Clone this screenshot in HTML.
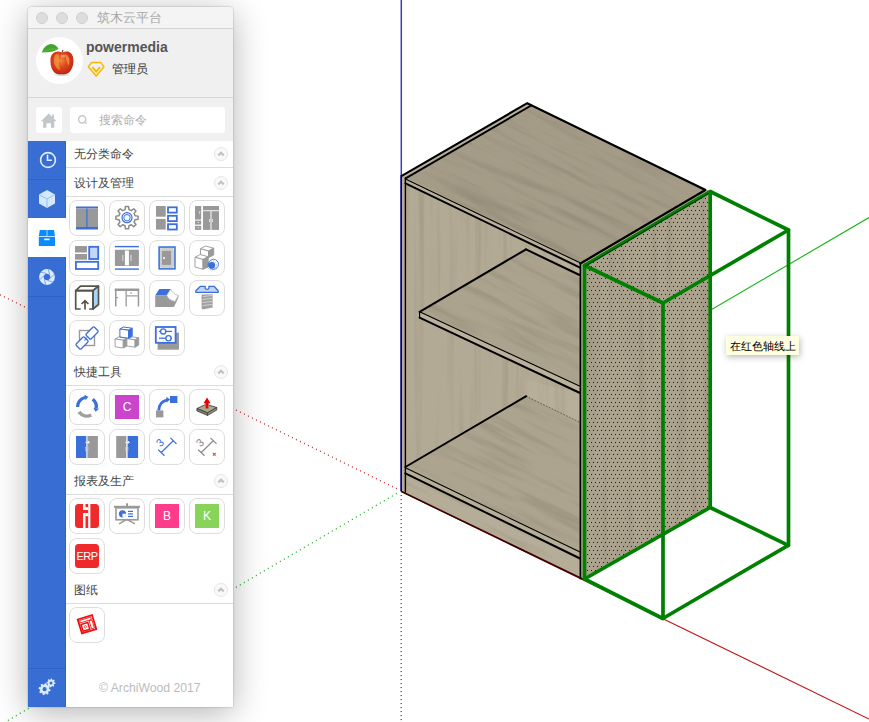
<!DOCTYPE html>
<html><head><meta charset="utf-8">
<style>
*{box-sizing:border-box;margin:0;padding:0}
html,body{width:869px;height:722px;overflow:hidden;background:#fff;font-family:"Liberation Sans",sans-serif}
#scene{position:absolute;left:0;top:0}
.a{position:absolute}
#win{left:28px;top:7px;width:205px;height:700px;background:#fff;border-radius:4px 4px 0 0;box-shadow:0 6px 34px rgba(0,0,0,.30),0 0 1.5px rgba(0,0,0,.45)}
#title{left:28px;top:7px;width:205px;height:22px;background:#f4f4f4;border-bottom:1px solid #d4d4d4;border-radius:4px 4px 0 0}
.tl{position:absolute;top:12px;width:12px;height:12px;border-radius:50%;background:#dddddd;border:0.5px solid #d0d0d0}
#ttext{left:97px;top:10px;font-size:13px;line-height:16px;color:#a8a8a8}
#head{left:28px;top:29px;width:205px;height:113px;background:#f0f0f0}
#avatar{left:36px;top:37px;width:47px;height:47px;border-radius:50%;background:#fff}
#uname{left:86px;top:39px;font-size:14px;line-height:17px;font-weight:bold;color:#555}
#role{left:112px;top:61px;font-size:11.6px;line-height:15px;color:#333}
#hline{left:28px;top:97px;width:205px;height:1px;background:#d6d6d6}
#home{left:36px;top:107px;width:26px;height:26px;background:#fff;border-radius:3px}
#search{left:70px;top:107px;width:155px;height:26px;background:#fff;border-radius:3px}
#ph{left:99px;top:113px;font-size:12px;line-height:15px;color:#b0b0b0}
#side{left:28px;top:141px;width:38px;height:566px;background:#386ed3}
#content{left:66px;top:141px;width:167px;height:566px;background:#fff}
.sl{position:absolute;left:66px;width:167px;height:1px;background:#dcdcdc}
.st{position:absolute;left:74px;font-size:12px;line-height:15px;color:#444}
.col{position:absolute;left:214px;width:14px;height:14px;border-radius:50%;border:1px solid #e6e6e6;background:#f9f9f9}
.btn{position:absolute;width:36px;height:36px;border:1px solid #dddddd;border-radius:8px;background:#fff;overflow:visible}
#copy{left:99px;top:681px;font-size:12.2px;line-height:14px;color:#bcbcbc}

</style></head><body>
<svg id="scene" width="869" height="722" viewBox="0 0 869 722">
<defs>
<pattern id="dots" width="4" height="8" patternUnits="userSpaceOnUse" x="0" y="0">
  <rect x="3" y="2" width="1" height="1" fill="#0000ff"/>
  <rect x="1" y="6" width="1" height="1" fill="#0000ff"/>
</pattern>
<filter id="gV" x="0%" y="0%" width="100%" height="100%" color-interpolation-filters="sRGB">
  <feTurbulence type="fractalNoise" baseFrequency="0.12 0.004" numOctaves="3" seed="4" result="n"/>
  <feColorMatrix in="n" type="matrix" values="0 0 0 0 0.40  0 0 0 0 0.37  0 0 0 0 0.30  -0.5 0 0 0 0.26" result="a"/>
  <feComposite in="a" in2="SourceGraphic" operator="in" result="b"/>
  <feMerge><feMergeNode in="SourceGraphic"/><feMergeNode in="b"/></feMerge>
</filter>
<filter id="gD" x="0%" y="0%" width="100%" height="100%" color-interpolation-filters="sRGB">
  <feTurbulence type="fractalNoise" baseFrequency="0.01 0.13" numOctaves="3" seed="9" result="n"/>
  <feColorMatrix in="n" type="matrix" values="0 0 0 0 0.36  0 0 0 0 0.33  0 0 0 0 0.27  -0.55 0 0 0 0.29" result="a"/>
  <feComposite in="a" in2="SourceGraphic" operator="in" result="b"/>
  <feMerge><feMergeNode in="SourceGraphic"/><feMergeNode in="b"/></feMerge>
</filter>
</defs>
<!-- axes -->
<rect x="395.90" y="487.75" width="1.1" height="1.4" fill="#cc4848"/>
<rect x="391.90" y="485.80" width="1.1" height="1.4" fill="#cc4848"/>
<rect x="387.90" y="483.84" width="1.1" height="1.4" fill="#cc4848"/>
<rect x="383.90" y="481.89" width="1.1" height="1.4" fill="#cc4848"/>
<rect x="379.90" y="479.93" width="1.1" height="1.4" fill="#cc4848"/>
<rect x="375.90" y="477.98" width="1.1" height="1.4" fill="#cc4848"/>
<rect x="371.90" y="476.03" width="1.1" height="1.4" fill="#cc4848"/>
<rect x="367.90" y="474.07" width="1.1" height="1.4" fill="#cc4848"/>
<rect x="363.90" y="472.12" width="1.1" height="1.4" fill="#cc4848"/>
<rect x="359.90" y="470.16" width="1.1" height="1.4" fill="#cc4848"/>
<rect x="355.90" y="468.21" width="1.1" height="1.4" fill="#cc4848"/>
<rect x="351.90" y="466.26" width="1.1" height="1.4" fill="#cc4848"/>
<rect x="347.90" y="464.30" width="1.1" height="1.4" fill="#cc4848"/>
<rect x="343.90" y="462.35" width="1.1" height="1.4" fill="#cc4848"/>
<rect x="339.90" y="460.39" width="1.1" height="1.4" fill="#cc4848"/>
<rect x="335.90" y="458.44" width="1.1" height="1.4" fill="#cc4848"/>
<rect x="331.90" y="456.49" width="1.1" height="1.4" fill="#cc4848"/>
<rect x="327.90" y="454.53" width="1.1" height="1.4" fill="#cc4848"/>
<rect x="323.90" y="452.58" width="1.1" height="1.4" fill="#cc4848"/>
<rect x="319.90" y="450.62" width="1.1" height="1.4" fill="#cc4848"/>
<rect x="315.90" y="448.67" width="1.1" height="1.4" fill="#cc4848"/>
<rect x="311.90" y="446.72" width="1.1" height="1.4" fill="#cc4848"/>
<rect x="307.90" y="444.76" width="1.1" height="1.4" fill="#cc4848"/>
<rect x="303.90" y="442.81" width="1.1" height="1.4" fill="#cc4848"/>
<rect x="299.90" y="440.85" width="1.1" height="1.4" fill="#cc4848"/>
<rect x="295.90" y="438.90" width="1.1" height="1.4" fill="#cc4848"/>
<rect x="291.90" y="436.95" width="1.1" height="1.4" fill="#cc4848"/>
<rect x="287.90" y="434.99" width="1.1" height="1.4" fill="#cc4848"/>
<rect x="283.90" y="433.04" width="1.1" height="1.4" fill="#cc4848"/>
<rect x="279.90" y="431.08" width="1.1" height="1.4" fill="#cc4848"/>
<rect x="275.90" y="429.13" width="1.1" height="1.4" fill="#cc4848"/>
<rect x="271.90" y="427.18" width="1.1" height="1.4" fill="#cc4848"/>
<rect x="267.90" y="425.22" width="1.1" height="1.4" fill="#cc4848"/>
<rect x="263.90" y="423.27" width="1.1" height="1.4" fill="#cc4848"/>
<rect x="259.90" y="421.31" width="1.1" height="1.4" fill="#cc4848"/>
<rect x="255.90" y="419.36" width="1.1" height="1.4" fill="#cc4848"/>
<rect x="251.90" y="417.41" width="1.1" height="1.4" fill="#cc4848"/>
<rect x="247.90" y="415.45" width="1.1" height="1.4" fill="#cc4848"/>
<rect x="243.90" y="413.50" width="1.1" height="1.4" fill="#cc4848"/>
<rect x="239.90" y="411.54" width="1.1" height="1.4" fill="#cc4848"/>
<rect x="235.90" y="409.59" width="1.1" height="1.4" fill="#cc4848"/>
<rect x="231.90" y="407.64" width="1.1" height="1.4" fill="#cc4848"/>
<rect x="227.90" y="405.68" width="1.1" height="1.4" fill="#cc4848"/>
<rect x="223.90" y="403.73" width="1.1" height="1.4" fill="#cc4848"/>
<rect x="219.90" y="401.77" width="1.1" height="1.4" fill="#cc4848"/>
<rect x="215.90" y="399.82" width="1.1" height="1.4" fill="#cc4848"/>
<rect x="211.90" y="397.87" width="1.1" height="1.4" fill="#cc4848"/>
<rect x="207.90" y="395.91" width="1.1" height="1.4" fill="#cc4848"/>
<rect x="203.90" y="393.96" width="1.1" height="1.4" fill="#cc4848"/>
<rect x="199.90" y="392.00" width="1.1" height="1.4" fill="#cc4848"/>
<rect x="195.90" y="390.05" width="1.1" height="1.4" fill="#cc4848"/>
<rect x="191.90" y="388.10" width="1.1" height="1.4" fill="#cc4848"/>
<rect x="187.90" y="386.14" width="1.1" height="1.4" fill="#cc4848"/>
<rect x="183.90" y="384.19" width="1.1" height="1.4" fill="#cc4848"/>
<rect x="179.90" y="382.23" width="1.1" height="1.4" fill="#cc4848"/>
<rect x="175.90" y="380.28" width="1.1" height="1.4" fill="#cc4848"/>
<rect x="171.90" y="378.33" width="1.1" height="1.4" fill="#cc4848"/>
<rect x="167.90" y="376.37" width="1.1" height="1.4" fill="#cc4848"/>
<rect x="163.90" y="374.42" width="1.1" height="1.4" fill="#cc4848"/>
<rect x="159.90" y="372.46" width="1.1" height="1.4" fill="#cc4848"/>
<rect x="155.90" y="370.51" width="1.1" height="1.4" fill="#cc4848"/>
<rect x="151.90" y="368.56" width="1.1" height="1.4" fill="#cc4848"/>
<rect x="147.90" y="366.60" width="1.1" height="1.4" fill="#cc4848"/>
<rect x="143.90" y="364.65" width="1.1" height="1.4" fill="#cc4848"/>
<rect x="139.90" y="362.69" width="1.1" height="1.4" fill="#cc4848"/>
<rect x="135.90" y="360.74" width="1.1" height="1.4" fill="#cc4848"/>
<rect x="131.90" y="358.79" width="1.1" height="1.4" fill="#cc4848"/>
<rect x="127.90" y="356.83" width="1.1" height="1.4" fill="#cc4848"/>
<rect x="123.90" y="354.88" width="1.1" height="1.4" fill="#cc4848"/>
<rect x="119.90" y="352.92" width="1.1" height="1.4" fill="#cc4848"/>
<rect x="115.90" y="350.97" width="1.1" height="1.4" fill="#cc4848"/>
<rect x="111.90" y="349.02" width="1.1" height="1.4" fill="#cc4848"/>
<rect x="107.90" y="347.06" width="1.1" height="1.4" fill="#cc4848"/>
<rect x="103.90" y="345.11" width="1.1" height="1.4" fill="#cc4848"/>
<rect x="99.90" y="343.15" width="1.1" height="1.4" fill="#cc4848"/>
<rect x="95.90" y="341.20" width="1.1" height="1.4" fill="#cc4848"/>
<rect x="91.90" y="339.25" width="1.1" height="1.4" fill="#cc4848"/>
<rect x="87.90" y="337.29" width="1.1" height="1.4" fill="#cc4848"/>
<rect x="83.90" y="335.34" width="1.1" height="1.4" fill="#cc4848"/>
<rect x="79.90" y="333.38" width="1.1" height="1.4" fill="#cc4848"/>
<rect x="75.90" y="331.43" width="1.1" height="1.4" fill="#cc4848"/>
<rect x="71.90" y="329.48" width="1.1" height="1.4" fill="#cc4848"/>
<rect x="67.90" y="327.52" width="1.1" height="1.4" fill="#cc4848"/>
<rect x="63.90" y="325.57" width="1.1" height="1.4" fill="#cc4848"/>
<rect x="59.90" y="323.61" width="1.1" height="1.4" fill="#cc4848"/>
<rect x="55.90" y="321.66" width="1.1" height="1.4" fill="#cc4848"/>
<rect x="51.90" y="319.71" width="1.1" height="1.4" fill="#cc4848"/>
<rect x="47.90" y="317.75" width="1.1" height="1.4" fill="#cc4848"/>
<rect x="43.90" y="315.80" width="1.1" height="1.4" fill="#cc4848"/>
<rect x="39.90" y="313.84" width="1.1" height="1.4" fill="#cc4848"/>
<rect x="35.90" y="311.89" width="1.1" height="1.4" fill="#cc4848"/>
<rect x="31.90" y="309.94" width="1.1" height="1.4" fill="#cc4848"/>
<rect x="27.90" y="307.98" width="1.1" height="1.4" fill="#cc4848"/>
<rect x="23.90" y="306.03" width="1.1" height="1.4" fill="#cc4848"/>
<rect x="19.90" y="304.07" width="1.1" height="1.4" fill="#cc4848"/>
<rect x="15.90" y="302.12" width="1.1" height="1.4" fill="#cc4848"/>
<rect x="11.90" y="300.17" width="1.1" height="1.4" fill="#cc4848"/>
<rect x="7.90" y="298.21" width="1.1" height="1.4" fill="#cc4848"/>
<rect x="3.90" y="296.26" width="1.1" height="1.4" fill="#cc4848"/>
<rect x="-0.10" y="294.30" width="1.1" height="1.4" fill="#cc4848"/>
<line x1="401.3" y1="0" x2="401.3" y2="491" stroke="#3a3ac8" stroke-width="1.5"/>
<line x1="401" y1="491.3" x2="869" y2="719" stroke="#c01414" stroke-width="1.1"/>
<line x1="401" y1="491.3" x2="869" y2="217.5" stroke="#14b414" stroke-width="1.1"/>
<rect x="395.80" y="492.99" width="1.1" height="1.4" fill="#36b836"/>
<rect x="391.80" y="495.32" width="1.1" height="1.4" fill="#36b836"/>
<rect x="387.80" y="497.66" width="1.1" height="1.4" fill="#36b836"/>
<rect x="383.80" y="499.99" width="1.1" height="1.4" fill="#36b836"/>
<rect x="379.80" y="502.33" width="1.1" height="1.4" fill="#36b836"/>
<rect x="375.80" y="504.67" width="1.1" height="1.4" fill="#36b836"/>
<rect x="371.80" y="507.00" width="1.1" height="1.4" fill="#36b836"/>
<rect x="367.80" y="509.34" width="1.1" height="1.4" fill="#36b836"/>
<rect x="363.80" y="511.67" width="1.1" height="1.4" fill="#36b836"/>
<rect x="359.80" y="514.01" width="1.1" height="1.4" fill="#36b836"/>
<rect x="355.80" y="516.35" width="1.1" height="1.4" fill="#36b836"/>
<rect x="351.80" y="518.68" width="1.1" height="1.4" fill="#36b836"/>
<rect x="347.80" y="521.02" width="1.1" height="1.4" fill="#36b836"/>
<rect x="343.80" y="523.35" width="1.1" height="1.4" fill="#36b836"/>
<rect x="339.80" y="525.69" width="1.1" height="1.4" fill="#36b836"/>
<rect x="335.80" y="528.03" width="1.1" height="1.4" fill="#36b836"/>
<rect x="331.80" y="530.36" width="1.1" height="1.4" fill="#36b836"/>
<rect x="327.80" y="532.70" width="1.1" height="1.4" fill="#36b836"/>
<rect x="323.80" y="535.03" width="1.1" height="1.4" fill="#36b836"/>
<rect x="319.80" y="537.37" width="1.1" height="1.4" fill="#36b836"/>
<rect x="315.80" y="539.71" width="1.1" height="1.4" fill="#36b836"/>
<rect x="311.80" y="542.04" width="1.1" height="1.4" fill="#36b836"/>
<rect x="307.80" y="544.38" width="1.1" height="1.4" fill="#36b836"/>
<rect x="303.80" y="546.71" width="1.1" height="1.4" fill="#36b836"/>
<rect x="299.80" y="549.05" width="1.1" height="1.4" fill="#36b836"/>
<rect x="295.80" y="551.39" width="1.1" height="1.4" fill="#36b836"/>
<rect x="291.80" y="553.72" width="1.1" height="1.4" fill="#36b836"/>
<rect x="287.80" y="556.06" width="1.1" height="1.4" fill="#36b836"/>
<rect x="283.80" y="558.39" width="1.1" height="1.4" fill="#36b836"/>
<rect x="279.80" y="560.73" width="1.1" height="1.4" fill="#36b836"/>
<rect x="275.80" y="563.07" width="1.1" height="1.4" fill="#36b836"/>
<rect x="271.80" y="565.40" width="1.1" height="1.4" fill="#36b836"/>
<rect x="267.80" y="567.74" width="1.1" height="1.4" fill="#36b836"/>
<rect x="263.80" y="570.07" width="1.1" height="1.4" fill="#36b836"/>
<rect x="259.80" y="572.41" width="1.1" height="1.4" fill="#36b836"/>
<rect x="255.80" y="574.75" width="1.1" height="1.4" fill="#36b836"/>
<rect x="251.80" y="577.08" width="1.1" height="1.4" fill="#36b836"/>
<rect x="247.80" y="579.42" width="1.1" height="1.4" fill="#36b836"/>
<rect x="243.80" y="581.75" width="1.1" height="1.4" fill="#36b836"/>
<rect x="239.80" y="584.09" width="1.1" height="1.4" fill="#36b836"/>
<rect x="235.80" y="586.43" width="1.1" height="1.4" fill="#36b836"/>
<rect x="231.80" y="588.76" width="1.1" height="1.4" fill="#36b836"/>
<rect x="227.80" y="591.10" width="1.1" height="1.4" fill="#36b836"/>
<rect x="223.80" y="593.43" width="1.1" height="1.4" fill="#36b836"/>
<rect x="219.80" y="595.77" width="1.1" height="1.4" fill="#36b836"/>
<rect x="215.80" y="598.11" width="1.1" height="1.4" fill="#36b836"/>
<rect x="211.80" y="600.44" width="1.1" height="1.4" fill="#36b836"/>
<rect x="207.80" y="602.78" width="1.1" height="1.4" fill="#36b836"/>
<rect x="203.80" y="605.11" width="1.1" height="1.4" fill="#36b836"/>
<rect x="199.80" y="607.45" width="1.1" height="1.4" fill="#36b836"/>
<rect x="195.80" y="609.79" width="1.1" height="1.4" fill="#36b836"/>
<rect x="191.80" y="612.12" width="1.1" height="1.4" fill="#36b836"/>
<rect x="187.80" y="614.46" width="1.1" height="1.4" fill="#36b836"/>
<rect x="183.80" y="616.79" width="1.1" height="1.4" fill="#36b836"/>
<rect x="179.80" y="619.13" width="1.1" height="1.4" fill="#36b836"/>
<rect x="175.80" y="621.47" width="1.1" height="1.4" fill="#36b836"/>
<rect x="171.80" y="623.80" width="1.1" height="1.4" fill="#36b836"/>
<rect x="167.80" y="626.14" width="1.1" height="1.4" fill="#36b836"/>
<rect x="163.80" y="628.47" width="1.1" height="1.4" fill="#36b836"/>
<rect x="159.80" y="630.81" width="1.1" height="1.4" fill="#36b836"/>
<rect x="155.80" y="633.15" width="1.1" height="1.4" fill="#36b836"/>
<rect x="151.80" y="635.48" width="1.1" height="1.4" fill="#36b836"/>
<rect x="147.80" y="637.82" width="1.1" height="1.4" fill="#36b836"/>
<rect x="143.80" y="640.15" width="1.1" height="1.4" fill="#36b836"/>
<rect x="139.80" y="642.49" width="1.1" height="1.4" fill="#36b836"/>
<rect x="135.80" y="644.83" width="1.1" height="1.4" fill="#36b836"/>
<rect x="131.80" y="647.16" width="1.1" height="1.4" fill="#36b836"/>
<rect x="127.80" y="649.50" width="1.1" height="1.4" fill="#36b836"/>
<rect x="123.80" y="651.83" width="1.1" height="1.4" fill="#36b836"/>
<rect x="119.80" y="654.17" width="1.1" height="1.4" fill="#36b836"/>
<rect x="115.80" y="656.51" width="1.1" height="1.4" fill="#36b836"/>
<rect x="111.80" y="658.84" width="1.1" height="1.4" fill="#36b836"/>
<rect x="107.80" y="661.18" width="1.1" height="1.4" fill="#36b836"/>
<rect x="103.80" y="663.51" width="1.1" height="1.4" fill="#36b836"/>
<rect x="99.80" y="665.85" width="1.1" height="1.4" fill="#36b836"/>
<rect x="95.80" y="668.19" width="1.1" height="1.4" fill="#36b836"/>
<rect x="91.80" y="670.52" width="1.1" height="1.4" fill="#36b836"/>
<rect x="87.80" y="672.86" width="1.1" height="1.4" fill="#36b836"/>
<rect x="83.80" y="675.19" width="1.1" height="1.4" fill="#36b836"/>
<rect x="79.80" y="677.53" width="1.1" height="1.4" fill="#36b836"/>
<rect x="75.80" y="679.87" width="1.1" height="1.4" fill="#36b836"/>
<rect x="71.80" y="682.20" width="1.1" height="1.4" fill="#36b836"/>
<rect x="67.80" y="684.54" width="1.1" height="1.4" fill="#36b836"/>
<rect x="63.80" y="686.87" width="1.1" height="1.4" fill="#36b836"/>
<rect x="59.80" y="689.21" width="1.1" height="1.4" fill="#36b836"/>
<rect x="55.80" y="691.55" width="1.1" height="1.4" fill="#36b836"/>
<rect x="51.80" y="693.88" width="1.1" height="1.4" fill="#36b836"/>
<rect x="47.80" y="696.22" width="1.1" height="1.4" fill="#36b836"/>
<rect x="43.80" y="698.55" width="1.1" height="1.4" fill="#36b836"/>
<rect x="39.80" y="700.89" width="1.1" height="1.4" fill="#36b836"/>
<rect x="35.80" y="703.23" width="1.1" height="1.4" fill="#36b836"/>
<rect x="31.80" y="705.56" width="1.1" height="1.4" fill="#36b836"/>
<rect x="27.80" y="707.90" width="1.1" height="1.4" fill="#36b836"/>
<rect x="23.80" y="710.23" width="1.1" height="1.4" fill="#36b836"/>
<rect x="19.80" y="712.57" width="1.1" height="1.4" fill="#36b836"/>
<rect x="15.80" y="714.91" width="1.1" height="1.4" fill="#36b836"/>
<rect x="11.80" y="717.24" width="1.1" height="1.4" fill="#36b836"/>
<rect x="7.80" y="719.58" width="1.1" height="1.4" fill="#36b836"/>
<rect x="3.80" y="721.91" width="1.1" height="1.4" fill="#36b836"/>
<rect x="400.5" y="495.00" width="1.4" height="1.1" fill="#4848e4"/>
<rect x="400.5" y="499.00" width="1.4" height="1.1" fill="#4848e4"/>
<rect x="400.5" y="503.00" width="1.4" height="1.1" fill="#4848e4"/>
<rect x="400.5" y="507.00" width="1.4" height="1.1" fill="#4848e4"/>
<rect x="400.5" y="511.00" width="1.4" height="1.1" fill="#4848e4"/>
<rect x="400.5" y="515.00" width="1.4" height="1.1" fill="#4848e4"/>
<rect x="400.5" y="519.00" width="1.4" height="1.1" fill="#4848e4"/>
<rect x="400.5" y="523.00" width="1.4" height="1.1" fill="#4848e4"/>
<rect x="400.5" y="527.00" width="1.4" height="1.1" fill="#4848e4"/>
<rect x="400.5" y="531.00" width="1.4" height="1.1" fill="#4848e4"/>
<rect x="400.5" y="535.00" width="1.4" height="1.1" fill="#4848e4"/>
<rect x="400.5" y="539.00" width="1.4" height="1.1" fill="#4848e4"/>
<rect x="400.5" y="543.00" width="1.4" height="1.1" fill="#4848e4"/>
<rect x="400.5" y="547.00" width="1.4" height="1.1" fill="#4848e4"/>
<rect x="400.5" y="551.00" width="1.4" height="1.1" fill="#4848e4"/>
<rect x="400.5" y="555.00" width="1.4" height="1.1" fill="#4848e4"/>
<rect x="400.5" y="559.00" width="1.4" height="1.1" fill="#4848e4"/>
<rect x="400.5" y="563.00" width="1.4" height="1.1" fill="#4848e4"/>
<rect x="400.5" y="567.00" width="1.4" height="1.1" fill="#4848e4"/>
<rect x="400.5" y="571.00" width="1.4" height="1.1" fill="#4848e4"/>
<rect x="400.5" y="575.00" width="1.4" height="1.1" fill="#4848e4"/>
<rect x="400.5" y="579.00" width="1.4" height="1.1" fill="#4848e4"/>
<rect x="400.5" y="583.00" width="1.4" height="1.1" fill="#4848e4"/>
<rect x="400.5" y="587.00" width="1.4" height="1.1" fill="#4848e4"/>
<rect x="400.5" y="591.00" width="1.4" height="1.1" fill="#4848e4"/>
<rect x="400.5" y="595.00" width="1.4" height="1.1" fill="#4848e4"/>
<rect x="400.5" y="599.00" width="1.4" height="1.1" fill="#4848e4"/>
<rect x="400.5" y="603.00" width="1.4" height="1.1" fill="#4848e4"/>
<rect x="400.5" y="607.00" width="1.4" height="1.1" fill="#4848e4"/>
<rect x="400.5" y="611.00" width="1.4" height="1.1" fill="#4848e4"/>
<rect x="400.5" y="615.00" width="1.4" height="1.1" fill="#4848e4"/>
<rect x="400.5" y="619.00" width="1.4" height="1.1" fill="#4848e4"/>
<rect x="400.5" y="623.00" width="1.4" height="1.1" fill="#4848e4"/>
<rect x="400.5" y="627.00" width="1.4" height="1.1" fill="#4848e4"/>
<rect x="400.5" y="631.00" width="1.4" height="1.1" fill="#4848e4"/>
<rect x="400.5" y="635.00" width="1.4" height="1.1" fill="#4848e4"/>
<rect x="400.5" y="639.00" width="1.4" height="1.1" fill="#4848e4"/>
<rect x="400.5" y="643.00" width="1.4" height="1.1" fill="#4848e4"/>
<rect x="400.5" y="647.00" width="1.4" height="1.1" fill="#4848e4"/>
<rect x="400.5" y="651.00" width="1.4" height="1.1" fill="#4848e4"/>
<rect x="400.5" y="655.00" width="1.4" height="1.1" fill="#4848e4"/>
<rect x="400.5" y="659.00" width="1.4" height="1.1" fill="#4848e4"/>
<rect x="400.5" y="663.00" width="1.4" height="1.1" fill="#4848e4"/>
<rect x="400.5" y="667.00" width="1.4" height="1.1" fill="#4848e4"/>
<rect x="400.5" y="671.00" width="1.4" height="1.1" fill="#4848e4"/>
<rect x="400.5" y="675.00" width="1.4" height="1.1" fill="#4848e4"/>
<rect x="400.5" y="679.00" width="1.4" height="1.1" fill="#4848e4"/>
<rect x="400.5" y="683.00" width="1.4" height="1.1" fill="#4848e4"/>
<rect x="400.5" y="687.00" width="1.4" height="1.1" fill="#4848e4"/>
<rect x="400.5" y="691.00" width="1.4" height="1.1" fill="#4848e4"/>
<rect x="400.5" y="695.00" width="1.4" height="1.1" fill="#4848e4"/>
<rect x="400.5" y="699.00" width="1.4" height="1.1" fill="#4848e4"/>
<rect x="400.5" y="703.00" width="1.4" height="1.1" fill="#4848e4"/>
<rect x="400.5" y="707.00" width="1.4" height="1.1" fill="#4848e4"/>
<rect x="400.5" y="711.00" width="1.4" height="1.1" fill="#4848e4"/>
<rect x="400.5" y="715.00" width="1.4" height="1.1" fill="#4848e4"/>
<rect x="400.5" y="719.00" width="1.4" height="1.1" fill="#4848e4"/>
<rect x="400.5" y="723.00" width="1.4" height="1.1" fill="#4848e4"/>
<polygon points="401.5,175.5 527.2,103.2 709,190.5 583.5,264.5 583.5,579.5 401.5,491.3" fill="#b0a792"/>
<!-- interior backdrop (inner face of left panel) -->
<g filter="url(#gV)">
  <polygon points="405,180 580.5,265 580.5,560 405,475" fill="#b3aa95"/>
</g>
<!-- back panel visible region (lighter) -->
<g filter="url(#gV)">
  <polygon points="526,244 580.5,270 580.5,393 526,366" fill="#b8af9a"/>
  <polygon points="526,380 580.5,393 580.5,423 526,396.5" fill="#b8af9a"/>
</g>
<!-- middle shelf top -->
<g transform="rotate(26 500 300)"><g filter="url(#gD)"><g transform="rotate(-26 500 300)">
  <polygon points="419.6,311.8 526,249.4 580.5,275.5 580.5,386.3" fill="#aca38e"/>
</g></g></g>
<!-- middle shelf front strip -->
<polygon points="419.6,311.8 580.5,386.3 580.5,393 419.6,317.7" fill="#bbb29d"/>
<!-- bottom shelf top -->
<g transform="rotate(26 500 300)"><g filter="url(#gD)"><g transform="rotate(-26 500 300)">
  <polygon points="405.3,467 526.2,396.2 580.5,422.4 580.5,551.7" fill="#ada48f"/>
</g></g></g>
<!-- bottom shelf front + kick plate -->
<polygon points="405.3,467 580.5,551.7 580.5,578.5 405.3,493" fill="#b7ae98"/>
<g transform="rotate(26 500 300)"><g filter="url(#gD)"><g transform="rotate(-26 500 300)"><polygon points="405.3,474 580.5,559 580.5,578.5 405.3,493" fill="#b6ad98"/></g></g></g>
<!-- top panel front strip -->
<polygon points="405.5,179 579.5,262.6 579.5,267.3 405.5,183.3" fill="#b9b09b"/>
<!-- left panel front strip -->
<polygon points="401.5,175.5 405.4,178 405.4,493 401.5,491.3" fill="#b6ad98"/>
<!-- right panel front strip -->
<polygon points="580.3,263 583.5,264.5 583.5,579.5 580.3,578" fill="#b6ad98"/>
<!-- top face -->
<g transform="rotate(26 500 300)"><g filter="url(#gD)"><g transform="rotate(-26 500 300)">
  <polygon points="402.2,175.6 527.2,103.2 705,189.8 580.5,263" fill="#a59c88"/>
</g></g></g>
<!-- left panel top strip -->
<polygon points="402.2,175.6 527.2,103.2 531.2,105.5 405.4,178.2" fill="#b8af9a"/>

<polygon points="580.5,263 705,189.8 711,191 711,200 583,270" fill="#b8af9a"/>
<!-- lines -->
<g stroke="#000" fill="none" stroke-linecap="round">
  <polyline points="402.2,175.6 527.2,103.2 705,189.8" stroke-width="2.1"/>
  <line x1="705" y1="190.2" x2="580.5" y2="263.4" stroke-width="2.3"/>
  <line x1="405.6" y1="178.4" x2="531.2" y2="105.5" stroke-width="1.9"/>
  <line x1="405.5" y1="179" x2="579.5" y2="262.6" stroke-width="1.1"/>
  <line x1="405.5" y1="183.3" x2="579.5" y2="267.3" stroke-width="2"/>
  <line x1="405.4" y1="178" x2="405.4" y2="492" stroke-width="1.4"/>
  <line x1="580.4" y1="263" x2="580.4" y2="578.5" stroke-width="1.7"/>
  <!-- middle shelf -->
  <line x1="419.6" y1="311.8" x2="526" y2="249.4" stroke-width="2"/>
  <line x1="526" y1="249.4" x2="579.5" y2="275" stroke-width="2"/>
  <line x1="419.6" y1="311.8" x2="580" y2="386.3" stroke-width="1.1"/>
  <line x1="419.6" y1="317.7" x2="580" y2="393" stroke-width="2"/>
  <line x1="419.6" y1="311.8" x2="419.6" y2="317.7" stroke-width="1.2"/>
  <!-- bottom shelf -->
  <line x1="405.4" y1="467" x2="526.2" y2="396.2" stroke-width="2"/>
  <line x1="405.4" y1="467.8" x2="580" y2="552" stroke-width="1.1"/>
  <line x1="405.4" y1="473.3" x2="580" y2="558.5" stroke-width="2"/>
  <line x1="526.2" y1="396.2" x2="580" y2="422.4" stroke-width="0.9" stroke-dasharray="1 2.2" stroke-opacity="0.45"/>
</g>
<line x1="401" y1="491.3" x2="583.5" y2="579.5" stroke="#3a0000" stroke-width="1.6"/>
<line x1="401.2" y1="175" x2="401.2" y2="491.3" stroke="#000078" stroke-width="1.6"/>

<!-- dotted face -->
<g filter="url(#gV)"><polygon points="583.5,264.5 710,190.5 710,508 583.5,579" fill="#aca38f"/></g>
<polygon points="583.5,264.5 710,190.5 710,507.5 583.5,579" fill="url(#dots)"/>
<!-- green box -->
<g stroke="#008000" stroke-width="3.7" fill="none" stroke-linejoin="round" stroke-linecap="round">
  <polyline points="584.5,265.5 710.2,191.5 788.5,230 663,303 584.5,265.5"/>
  <polyline points="584.5,579 662.8,618.5 788.3,545.3 710.2,507.5 584.5,579"/>
  <line x1="584.5" y1="265.5" x2="584.5" y2="579"/>
  <line x1="710.2" y1="191.5" x2="710.2" y2="507.5"/>
  <line x1="788.5" y1="230" x2="788.5" y2="545.3"/>
  <line x1="663" y1="303" x2="663" y2="618.5"/>
</g>
<line x1="585" y1="266.3" x2="708.5" y2="193.6" stroke="#000" stroke-width="0.9" stroke-opacity="0.75"/>
<!-- tooltip -->
<rect x="726" y="336" width="73" height="19" fill="#ffffe1" style="filter:drop-shadow(1px 2px 3px rgba(0,0,0,.28))"/>
<text x="729.5" y="349.8" font-size="11" fill="#000" font-family="Liberation Sans, sans-serif">在红色轴线上</text>
</svg>

<div id="win" class="a"></div>
<div id="title" class="a"></div>
<div class="tl" style="left:36px;top:12px"></div>
<div class="tl" style="left:56px;top:12px"></div>
<div class="tl" style="left:76px;top:12px"></div>
<div id="ttext" class="a">筑木云平台</div>
<div id="head" class="a"></div>
<div id="avatar" class="a"></div>
<div id="uname" class="a">powermedia</div>
<div id="role" class="a">管理员</div>
<div id="hline" class="a"></div>
<div id="home" class="a"></div>
<div id="search" class="a"></div>
<div id="ph" class="a">搜索命令</div>
<div id="side" class="a"></div>
<div id="content" class="a"></div>
<div class="sl" style="top:167px"></div><div class="st" style="top:147px">无分类命令</div><div class="col" style="top:147px"></div>
<div class="sl" style="top:196px"></div><div class="st" style="top:176px">设计及管理</div><div class="col" style="top:176px"></div>
<div class="sl" style="top:385px"></div><div class="st" style="top:365px">快捷工具</div><div class="col" style="top:365px"></div>
<div class="sl" style="top:494px"></div><div class="st" style="top:474px">报表及生产</div><div class="col" style="top:474px"></div>
<div class="sl" style="top:603px"></div><div class="st" style="top:583px">图纸</div><div class="col" style="top:583px"></div>
<div id="copy" class="a">© ArchiWood 2017</div>
<!--EXTRA-->
<div class="a" style="left:65px;top:141px;width:1px;height:566px;background:#2d62c8"></div>
<div class="a" style="left:28px;top:179px;width:38px;height:1px;background:#2f62c6"></div>
<div class="a" style="left:28px;top:218px;width:38px;height:39px;background:#fff"></div>
<div class="a" style="left:28px;top:296px;width:38px;height:1px;background:#2f62c6"></div>
<div class="a" style="left:28px;top:668px;width:38px;height:1px;background:#2f62c6"></div>
<svg class="a" style="left:0;top:0" width="240" height="722" viewBox="0 0 240 722">
  <!-- avatar apple -->
  <defs>
    <radialGradient id="apg" cx="0.45" cy="0.4" r="0.65">
      <stop offset="0" stop-color="#f08a3a"/>
      <stop offset="0.45" stop-color="#e0461c"/>
      <stop offset="0.85" stop-color="#c52a12"/>
      <stop offset="1" stop-color="#a81e0c"/>
    </radialGradient>
    <radialGradient id="shd" cx="0.5" cy="0.5" r="0.5">
      <stop offset="0" stop-color="#000" stop-opacity="0.28"/>
      <stop offset="1" stop-color="#000" stop-opacity="0"/>
    </radialGradient>
  </defs>
  <ellipse cx="62" cy="74.5" rx="9" ry="2.2" fill="url(#shd)"/>
  <path d="M50.5 58 Q52 51.5 58 51.5 Q61 52 62.5 52.5 Q65 51 68 51.5 Q73.5 53 73.5 61 Q73.5 68 69 72.5 Q66 75 62 74 Q58 75 55 73 Q50.5 69 50.5 62 Z" fill="url(#apg)"/>
  <path d="M56 54 Q58 53 59 56 Q58 63 60 70 Q56 69 54 63 Q53.5 57 56 54Z" fill="#f5b050" opacity="0.55"/>
  <path d="M65 54 Q67.5 54.5 69 58 Q70 62 68.5 66 Q66.5 61 65 54Z" fill="#f8c060" opacity="0.55"/>
  <ellipse cx="63" cy="56" rx="2.5" ry="1.5" fill="#fff" opacity="0.35"/>
  <path d="M62.2 52.5 L63 49.8" stroke="#6b4420" stroke-width="1.1"/>
  <path d="M41.8 52.6 Q44 45 50.5 44 Q56 44 58.5 48.8 Q55 52.3 41.8 52.6 Z" fill="#44a52c"/>
  <path d="M43 52 Q50 48 57.5 48.8" stroke="#6cc048" stroke-width="0.6" fill="none"/>
  <!-- diamond -->
  <path d="M91.5 62.6 L100.8 62.6 L104 66.8 L96.2 76 L88.3 66.8 Z" fill="none" stroke="#f8b800" stroke-width="1.5" stroke-linejoin="round"/>
  <path d="M92.3 67.2 L96.2 71.6 L100 67.2" fill="none" stroke="#f8b800" stroke-width="1.9"/>
  <!-- home -->
  <path d="M40.8 121.3 L48.7 113.6 L56.6 121.3 L54.3 121.3 L54.3 127.8 L51 127.8 L51 123.3 L46.4 123.3 L46.4 127.8 L43.1 127.8 L43.1 121.3 Z" fill="#c4c7ca"/>
  <rect x="52.2" y="114.5" width="1.8" height="3.5" fill="#c4c7ca"/>
  <!-- search -->
  <circle cx="82.2" cy="119.3" r="3.6" fill="none" stroke="#cacaca" stroke-width="1.5"/>
  <line x1="84.8" y1="121.9" x2="86.6" y2="123.7" stroke="#cacaca" stroke-width="1.6"/>
  <!-- clock -->
  <circle cx="48" cy="160" r="7.4" fill="none" stroke="#e6efff" stroke-width="1.6"/>
  <path d="M47.5 154.8 L47.5 160.3 L51.8 160.3" fill="none" stroke="#e6efff" stroke-width="1.6"/>
  <!-- cube -->
  <path d="M47 190 L55 194.5 L55 203.5 L47 208 L39 203.5 L39 194.5 Z" fill="#d4e9ff"/>
  <path d="M39.3 194.7 L47 199 L54.7 194.7 M47 199 L47 207.5" fill="none" stroke="#8fb8f0" stroke-width="0.9"/>
  <!-- box -->
  <path d="M39.8 230 L54 230 L55 236.3 L38.8 236.3 Z" fill="#0a8cff"/>
  <rect x="38.8" y="237" width="16.2" height="9" fill="#0a8cff"/>
  <rect x="46.6" y="230" width="0.8" height="6.3" fill="#cfe6ff"/>
  <rect x="44.2" y="238.6" width="5.4" height="1.6" fill="#fff"/>
  <!-- aperture -->
  <path d="M54.9 277.0 A7.9 7.9 0 1 0 39.1 277.0 A7.9 7.9 0 1 0 54.9 277.0 Z M50.57 277.96 L47.96 280.57 L44.38 279.62 L43.43 276.04 L46.04 273.43 L49.62 274.38 Z" fill="#d8ebff" fill-rule="evenodd"/>
  <line x1="50.57" y1="277.96" x2="54.37" y2="274.16" stroke="#5b8ad8" stroke-width="0.7"/><line x1="47.96" y1="280.57" x2="53.15" y2="281.96" stroke="#5b8ad8" stroke-width="0.7"/><line x1="44.38" y1="279.62" x2="45.77" y2="284.80" stroke="#5b8ad8" stroke-width="0.7"/><line x1="43.43" y1="276.04" x2="39.63" y2="279.84" stroke="#5b8ad8" stroke-width="0.7"/><line x1="46.04" y1="273.43" x2="40.85" y2="272.04" stroke="#5b8ad8" stroke-width="0.7"/><line x1="49.62" y1="274.38" x2="48.23" y2="269.20" stroke="#5b8ad8" stroke-width="0.7"/>
  <!-- gears -->
  <path d="M49.19,688.89 L50.59,689.46 L50.22,691.30 L48.71,691.27 L48.06,692.23 L48.66,693.62 L47.09,694.66 L46.04,693.57 L44.91,693.79 L44.34,695.19 L42.50,694.82 L42.53,693.31 L41.57,692.66 L40.18,693.26 L39.14,691.69 L40.23,690.64 L40.01,689.51 L38.61,688.94 L38.98,687.10 L40.49,687.13 L41.14,686.17 L40.54,684.78 L42.11,683.74 L43.16,684.83 L44.29,684.61 L44.86,683.21 L46.70,683.58 L46.67,685.09 L47.63,685.74 L49.02,685.14 L50.06,686.71 L48.97,687.76 Z M46.70,689.20 A2.1,2.1 0 1 0 42.50,689.20 A2.1,2.1 0 1 0 46.70,689.20 Z" fill="#dcecff" fill-rule="evenodd"/>
  <path d="M54.25,682.35 L55.39,682.65 L55.26,684.02 L54.08,684.08 L53.69,684.81 L54.28,685.83 L53.22,686.70 L52.34,685.92 L51.55,686.15 L51.25,687.29 L49.88,687.16 L49.82,685.98 L49.09,685.59 L48.07,686.18 L47.20,685.12 L47.98,684.24 L47.75,683.45 L46.61,683.15 L46.74,681.78 L47.92,681.72 L48.31,680.99 L47.72,679.97 L48.78,679.10 L49.66,679.88 L50.45,679.65 L50.75,678.51 L52.12,678.64 L52.18,679.82 L52.91,680.21 L53.93,679.62 L54.80,680.68 L54.02,681.56 Z M52.50,682.90 A1.5,1.5 0 1 0 49.50,682.90 A1.5,1.5 0 1 0 52.50,682.90 Z" fill="#dcecff" fill-rule="evenodd"/>
</svg>
<svg class="a" style="left:214px;top:147px" width="14" height="14" viewBox="0 0 14 14"><path d="M4.3 8.4 L7 5.7 L9.7 8.4" fill="none" stroke="#c2c2c2" stroke-width="2.2"/></svg>
<svg class="a" style="left:214px;top:176px" width="14" height="14" viewBox="0 0 14 14"><path d="M4.3 8.4 L7 5.7 L9.7 8.4" fill="none" stroke="#c2c2c2" stroke-width="2.2"/></svg>
<svg class="a" style="left:214px;top:365px" width="14" height="14" viewBox="0 0 14 14"><path d="M4.3 8.4 L7 5.7 L9.7 8.4" fill="none" stroke="#c2c2c2" stroke-width="2.2"/></svg>
<svg class="a" style="left:214px;top:474px" width="14" height="14" viewBox="0 0 14 14"><path d="M4.3 8.4 L7 5.7 L9.7 8.4" fill="none" stroke="#c2c2c2" stroke-width="2.2"/></svg>
<svg class="a" style="left:214px;top:583px" width="14" height="14" viewBox="0 0 14 14"><path d="M4.3 8.4 L7 5.7 L9.7 8.4" fill="none" stroke="#c2c2c2" stroke-width="2.2"/></svg>

<div class="btn" style="left:69px;top:200px"><svg width="36" height="36" viewBox="0 0 36 36" style="position:absolute;left:-1px;top:-1px"><rect x="7" y="6.5" width="22" height="2" fill="#3a6fdc"/><rect x="7" y="8.5" width="22" height="18.5" fill="#999"/>
<rect x="7" y="27" width="22" height="2.5" fill="#3a6fdc"/><rect x="17.3" y="8.5" width="1.2" height="18.5" fill="#3a6fdc"/></svg></div>
<div class="btn" style="left:109px;top:200px"><svg width="36" height="36" viewBox="0 0 36 36" style="position:absolute;left:-1px;top:-1px"><polygon points="26.07,15.76 29.09,16.12 29.09,19.28 26.07,19.64 25.08,22.04 26.96,24.42 24.72,26.66 22.34,24.78 19.94,25.77 19.58,28.79 16.42,28.79 16.06,25.77 13.66,24.78 11.28,26.66 9.04,24.42 10.92,22.04 9.93,19.64 6.91,19.28 6.91,16.12 9.93,15.76 10.92,13.36 9.04,10.98 11.28,8.74 13.66,10.62 16.06,9.63 16.42,6.61 19.58,6.61 19.94,9.63 22.34,10.62 24.72,8.74 26.96,10.98 25.08,13.36" fill="none" stroke="#8a8a8a" stroke-width="1.5" stroke-linejoin="round"/>
<circle cx="18" cy="17.7" r="5" fill="none" stroke="#3a6fdc" stroke-width="1.2"/><circle cx="18" cy="17.7" r="3.2" fill="none" stroke="#3a6fdc" stroke-width="1"/></svg></div>
<div class="btn" style="left:149px;top:200px"><svg width="36" height="36" viewBox="0 0 36 36" style="position:absolute;left:-1px;top:-1px"><rect x="7" y="6" width="9.7" height="10.7" fill="#999"/><rect x="7" y="18.9" width="9.7" height="10.7" fill="#999"/>
<rect x="19" y="7.3" width="8.8" height="5.3" fill="#fff" stroke="#3a6fdc" stroke-width="1.8"/>
<rect x="19" y="15.8" width="8.8" height="5.3" fill="#fff" stroke="#3a6fdc" stroke-width="1.8"/>
<rect x="19" y="24.2" width="8.8" height="5.3" fill="#fff" stroke="#3a6fdc" stroke-width="1.8"/></svg></div>
<div class="btn" style="left:189px;top:200px"><svg width="36" height="36" viewBox="0 0 36 36" style="position:absolute;left:-1px;top:-1px"><rect x="6" y="6" width="6.2" height="13.6" fill="#999"/><rect x="10" y="11" width="1.2" height="3" fill="#ccc"/>
<rect x="6" y="20.6" width="6.2" height="4" fill="#999"/><rect x="6" y="25.8" width="6.2" height="4.1" fill="#999"/>
<rect x="8.5" y="22" width="1.5" height="1" fill="#ddd"/><rect x="8.5" y="27.2" width="1.5" height="1" fill="#ddd"/>
<rect x="14" y="6" width="16" height="4.3" fill="#999"/><rect x="14" y="11.2" width="7.5" height="18.7" fill="#999"/><rect x="22.5" y="11.2" width="7.5" height="18.7" fill="#999"/>
<rect x="20" y="19" width="1" height="3" fill="#ddd"/><rect x="23" y="19" width="1" height="3" fill="#ddd"/></svg></div>
<div class="btn" style="left:69px;top:240px"><svg width="36" height="36" viewBox="0 0 36 36" style="position:absolute;left:-1px;top:-1px"><rect x="6" y="6" width="12" height="6.5" fill="#999"/><rect x="6" y="14" width="12" height="5.7" fill="#999"/>
<rect x="20.2" y="6.8" width="9" height="12.2" fill="#c6d6f6" stroke="#3a6fdc" stroke-width="1.8"/>
<rect x="6.9" y="21.8" width="22.3" height="7.2" fill="#fff" stroke="#3a6fdc" stroke-width="1.8"/></svg></div>
<div class="btn" style="left:109px;top:240px"><svg width="36" height="36" viewBox="0 0 36 36" style="position:absolute;left:-1px;top:-1px"><rect x="5.9" y="5.9" width="24" height="1.4" fill="#3a6fdc"/><rect x="5.9" y="9.8" width="24" height="16.2" rx="0.8" fill="#999"/>
<rect x="15.9" y="10.6" width="4" height="14.8" fill="#fff"/><rect x="13.1" y="14.9" width="1.3" height="6.1" fill="#cfcfcf"/><rect x="21.3" y="14.9" width="1.4" height="6.1" fill="#cfcfcf"/>
<rect x="5.9" y="28.4" width="24" height="1.4" fill="#3a6fdc"/></svg></div>
<div class="btn" style="left:149px;top:240px"><svg width="36" height="36" viewBox="0 0 36 36" style="position:absolute;left:-1px;top:-1px"><rect x="10.1" y="7" width="15.9" height="21.9" fill="#cdcdcd" stroke="#3a6fdc" stroke-width="1.5"/>
<rect x="13" y="10.9" width="9.1" height="14" fill="#999"/><rect x="14.2" y="17.1" width="1.8" height="1.7" fill="#fff"/>
<g fill="#fff"><circle cx="12" cy="9" r="0.5"/><circle cx="24.5" cy="9" r="0.5"/><circle cx="12" cy="27" r="0.5"/><circle cx="24.5" cy="27" r="0.5"/></g></svg></div>
<div class="btn" style="left:189px;top:240px"><svg width="36" height="36" viewBox="0 0 36 36" style="position:absolute;left:-1px;top:-1px"><g stroke="#999" stroke-width="0.9" stroke-linejoin="round">
<polygon points="11.5,8.8 16.5,6 24.7,8.2 19.5,11" fill="#fff"/><polygon points="11.5,8.8 19.5,11 19.5,17.5 11.5,15" fill="#fff"/><polygon points="19.5,11 24.7,8.2 24.7,15 19.5,17.5" fill="#9a9a9a"/>
<polygon points="6,17.3 11,14.5 19.2,16.7 14,19.5" fill="#fff"/><polygon points="6,17.3 14,19.5 14,29.3 6,27" fill="#fff"/><polygon points="14,19.5 19.2,16.7 19.2,27 14,29.3" fill="#9a9a9a"/></g>
<circle cx="24.5" cy="24.3" r="5" fill="none" stroke="#3a6fdc" stroke-width="0.9"/><circle cx="22.8" cy="25.4" r="3.3" fill="#3a6fdc"/><circle cx="22.8" cy="25.4" r="4.5" fill="none" stroke="#3a6fdc" stroke-width="0.6" stroke-dasharray="1 1"/></svg></div>
<div class="btn" style="left:69px;top:280px"><svg width="36" height="36" viewBox="0 0 36 36" style="position:absolute;left:-1px;top:-1px"><path d="M6.7 10.7 L11.5 6.2 L29.5 6.2 L24 10.7 Z" fill="#fff" stroke="#57544c" stroke-width="1.7" stroke-linejoin="round"/>
<path d="M24 10.7 L29.5 6.2 L29.5 24.5 L24 29 Z" fill="#a8d4f8" stroke="#57544c" stroke-width="1.7" stroke-linejoin="round"/>
<path d="M11.7 29 L6.7 29 L6.7 10.7 L24 10.7 L24 29 L20.2 29" fill="none" stroke="#57544c" stroke-width="1.7" stroke-linejoin="round"/>
<path d="M16 29.5 L16 20.8 M12.6 24 L16 20.6 L19.4 24" fill="none" stroke="#57544c" stroke-width="1.7"/></svg></div>
<div class="btn" style="left:109px;top:280px"><svg width="36" height="36" viewBox="0 0 36 36" style="position:absolute;left:-1px;top:-1px"><rect x="5.7" y="8.5" width="24.5" height="2.5" fill="#999"/><rect x="6" y="11" width="1.5" height="15.5" fill="#999"/>
<rect x="16.5" y="11" width="1.3" height="15.5" fill="#999"/><rect x="28.7" y="11" width="1.5" height="15.5" fill="#999"/>
<rect x="17.8" y="15.3" width="11" height="1.2" fill="#999"/><rect x="7.5" y="17" width="1.2" height="1.2" fill="#3a6fdc"/><rect x="21.5" y="12.4" width="1.2" height="1.2" fill="#3a6fdc"/></svg></div>
<div class="btn" style="left:149px;top:280px"><svg width="36" height="36" viewBox="0 0 36 36" style="position:absolute;left:-1px;top:-1px"><polygon points="6.2,15.5 10.3,9 21.7,9 17.7,15.5" fill="#3a6fdc"/>
<path d="M6.2 15.5 L17.7 15.5 Q20 20.5 26 21.5 L29.4 15.6 L29.4 17.5 L25 27 L6.2 27 Z" fill="#999"/>
<path d="M21.7 9 Q23.5 14 29.4 15.4 L26 21.5 Q20 20.5 17.7 15.5 Z" fill="#fff" stroke="#aaa" stroke-width="0.7"/></svg></div>
<div class="btn" style="left:189px;top:280px"><svg width="36" height="36" viewBox="0 0 36 36" style="position:absolute;left:-1px;top:-1px"><path d="M6.8 10.8 L11.5 6.3 L16.2 6.3 L16.2 8.3 Q16.5 9.3 18 9.3 Q19.6 9.3 19.9 8.3 L19.9 6.3 L25 6.3 L29.2 10.8 L29.2 12.3 L6.8 12.3 Z" fill="#c2d5f5" stroke="#3a6fdc" stroke-width="1.3" stroke-linejoin="round"/>
<path d="M12.6 14.5 L23.6 14.2 L23.6 27.5 L14 29.5 L12.6 28.5 Z" fill="#a0a0a0"/>
<g stroke="#d8d8d8" stroke-width="0.9"><line x1="14" y1="16.5" x2="23" y2="15.5"/><line x1="13.5" y1="19.5" x2="23" y2="18.5"/><line x1="13.5" y1="22.5" x2="23" y2="21.5"/><line x1="13.5" y1="25.5" x2="23" y2="24.5"/></g></svg></div>
<div class="btn" style="left:69px;top:320px"><svg width="36" height="36" viewBox="0 0 36 36" style="position:absolute;left:-1px;top:-1px"><rect x="10.5" y="10.5" width="15" height="15" fill="none" stroke="#999" stroke-width="1.4"/>
<g fill="#fff" stroke="#3a6fdc" stroke-width="1.3"><rect x="17.3" y="9.5" width="11.5" height="7" rx="1.2" transform="rotate(-45 23.05 13)"/><rect x="7.3" y="19.5" width="11.5" height="7" rx="1.2" transform="rotate(-45 13.05 23)"/></g>
<path d="M15.5 20.5 Q17.5 19 17 17.5" fill="none" stroke="#3a6fdc" stroke-width="1.1"/></svg></div>
<div class="btn" style="left:109px;top:320px"><svg width="36" height="36" viewBox="0 0 36 36" style="position:absolute;left:-1px;top:-1px"><g stroke-linejoin="round">
<g stroke="#999" stroke-width="0.9"><polygon points="6.1,19 9.5,17 17.9,18.2 14.3,20.2" fill="#fff"/><polygon points="6.1,19 14.3,20.2 14.3,28 6.1,26.8" fill="#fff"/><polygon points="14.3,20.2 17.9,18.2 17.9,26 14.3,28" fill="#9a9a9a"/>
<polygon points="17.9,18.6 21.3,16.6 29.7,17.8 26.1,19.8" fill="#fff"/><polygon points="17.9,18.6 26.1,19.8 26.1,27.2 17.9,26" fill="#fff"/><polygon points="26.1,19.8 29.7,17.8 29.7,25 26.1,27.2" fill="#9a9a9a"/></g>
<g stroke="#3a6fdc" stroke-width="1"><polygon points="10.9,9 14.3,7 23.2,8.2 19.6,10.2" fill="#fff"/><polygon points="10.9,9 19.6,10.2 19.6,18.3 10.9,17" fill="#fff"/><polygon points="19.6,10.2 23.2,8.2 23.2,16.3 19.6,18.3" fill="#3a6fdc"/></g></g></svg></div>
<div class="btn" style="left:149px;top:320px"><svg width="36" height="36" viewBox="0 0 36 36" style="position:absolute;left:-1px;top:-1px"><rect x="8.6" y="12.7" width="21.4" height="17" fill="#999"/>
<rect x="6.8" y="7" width="19.8" height="15.8" fill="#fff" stroke="#3a6fdc" stroke-width="1.8"/>
<g stroke="#3a6fdc" stroke-width="1.3" fill="#fff"><line x1="10" y1="11.4" x2="23" y2="11.4"/><line x1="10" y1="18.2" x2="23" y2="18.2"/><circle cx="14.2" cy="11.4" r="2.6"/><circle cx="19.5" cy="18.2" r="2.6"/></g></svg></div>
<div class="btn" style="left:69px;top:389px"><svg width="36" height="36" viewBox="0 0 36 36" style="position:absolute;left:-1px;top:-1px"><path d="M8.51 18.03 A9.4 9.4 0 0 1 15.95 8.51" fill="none" stroke="#3a6fdc" stroke-width="3.3"/><polygon points="19.35,7.78 15.34,5.67 16.55,11.34" fill="#3a6fdc"/><path d="M23.69 10.29 A9.4 9.4 0 0 1 27.16 19.33" fill="none" stroke="#3a6fdc" stroke-width="3.3"/><polygon points="26.55,22.76 30.01,19.84 24.30,18.83" fill="#3a6fdc"/><path d="M22.31 26.00 A9.4 9.4 0 0 1 10.11 22.96" fill="none" stroke="#a0a0a0" stroke-width="3.3"/><polygon points="11.65,25.24 8.20,24.24 12.01,21.67" fill="#a0a0a0"/></svg></div>
<div class="btn" style="left:109px;top:389px"><svg width="36" height="36" viewBox="0 0 36 36" style="position:absolute;left:-1px;top:-1px"><rect x="6" y="6" width="24" height="24" fill="#cc44cc"/><text x="18" y="22.3" font-size="12" fill="#fff" text-anchor="middle" font-family="Liberation Sans">C</text></svg></div>
<div class="btn" style="left:149px;top:389px"><svg width="36" height="36" viewBox="0 0 36 36" style="position:absolute;left:-1px;top:-1px"><rect x="7" y="21.4" width="7.4" height="7" fill="#999"/><rect x="21" y="7" width="7.4" height="7" fill="#3a6fdc"/>
<path d="M9.8 21.4 Q10 12.5 18.5 10.8" fill="none" stroke="#3a6fdc" stroke-width="2.8"/><polygon points="17.3,7.8 21.2,10.6 17.6,13.6" fill="#3a6fdc"/></svg></div>
<div class="btn" style="left:189px;top:389px"><svg width="36" height="36" viewBox="0 0 36 36" style="position:absolute;left:-1px;top:-1px"><polygon points="7.9,19.5 17,15.3 27.8,18.5 18.5,23.8" fill="#a9a98c" stroke="#333" stroke-width="0.8" stroke-linejoin="round"/>
<polygon points="7.9,19.5 18.5,23.8 18.5,26.5 7.9,22" fill="#7d7d66" stroke="#333" stroke-width="0.7" stroke-linejoin="round"/>
<polygon points="18.5,23.8 27.8,18.5 27.8,21 18.5,26.5" fill="#8e8e76" stroke="#333" stroke-width="0.7" stroke-linejoin="round"/>
<rect x="16.3" y="13.5" width="3.4" height="6.3" fill="#ee0000" stroke="#9a9a9a" stroke-width="0.6"/><polygon points="14.5,14.3 18,8.6 21.5,14.3" fill="#ee0000"/></svg></div>
<div class="btn" style="left:69px;top:429px"><svg width="36" height="36" viewBox="0 0 36 36" style="position:absolute;left:-1px;top:-1px"><rect x="7" y="7" width="10.3" height="22" fill="#3a6fdc"/><rect x="18.4" y="7" width="10.5" height="22" fill="#999"/><path d="M16.5 13.3 L20.3 13.3 M18.8 11.8 L20.3 13.3 L18.8 14.8" stroke="#fff" stroke-width="0.9" fill="none"/><rect x="16.6" y="18.3" width="2.4" height="3.5" fill="none" stroke="#b8c8ea" stroke-width="0.6"/></svg></div>
<div class="btn" style="left:109px;top:429px"><svg width="36" height="36" viewBox="0 0 36 36" style="position:absolute;left:-1px;top:-1px"><rect x="7.2" y="7" width="10.1" height="22" fill="#999"/><rect x="18.6" y="7" width="10.5" height="22" fill="#3a6fdc"/><path d="M16.5 13.3 L20.3 13.3 M18.8 11.8 L20.3 13.3 L18.8 14.8" stroke="#fff" stroke-width="0.9" fill="none"/><rect x="16.6" y="18.3" width="2.4" height="3.5" fill="none" stroke="#b8c8ea" stroke-width="0.6"/></svg></div>
<div class="btn" style="left:149px;top:429px"><svg width="36" height="36" viewBox="0 0 36 36" style="position:absolute;left:-1px;top:-1px"><g stroke="#3a6fdc" stroke-width="1.2" fill="none"><line x1="12.3" y1="23.5" x2="24.5" y2="11.5"/><line x1="9.3" y1="20.8" x2="15.5" y2="26.8"/><line x1="21.5" y1="8.8" x2="27.5" y2="14.8"/></g>
<text x="0" y="0" font-size="11" fill="#3a6fdc" font-family="Liberation Sans, sans-serif" transform="translate(11.5 18.5) rotate(-45)">3</text></svg></div>
<div class="btn" style="left:189px;top:429px"><svg width="36" height="36" viewBox="0 0 36 36" style="position:absolute;left:-1px;top:-1px"><g stroke="#8a8a8a" stroke-width="1.2" fill="none"><line x1="12.3" y1="23.5" x2="24.5" y2="11.5"/><line x1="9.3" y1="20.8" x2="15.5" y2="26.8"/><line x1="21.5" y1="8.8" x2="27.5" y2="14.8"/></g>
<text x="0" y="0" font-size="11" fill="#8a8a8a" font-family="Liberation Sans, sans-serif" transform="translate(11.5 18.5) rotate(-45)">3</text><path d="M24 24 L26.6 26.6 M26.6 24 L24 26.6" stroke="#f04848" stroke-width="1.2"/></svg></div>
<div class="btn" style="left:69px;top:498px"><svg width="36" height="36" viewBox="0 0 36 36" style="position:absolute;left:-1px;top:-1px"><rect x="6" y="6" width="24" height="24" rx="3.5" fill="#ee2a2a"/><g fill="#fff"><rect x="14" y="6" width="2.5" height="6"/><rect x="14" y="15" width="2.5" height="15"/><rect x="16.3" y="9.2" width="3" height="2.8"/><rect x="16.3" y="15" width="3" height="3.2"/><rect x="19.2" y="6" width="2.2" height="24"/></g></svg></div>
<div class="btn" style="left:109px;top:498px"><svg width="36" height="36" viewBox="0 0 36 36" style="position:absolute;left:-1px;top:-1px"><g transform="translate(0 1.8)"><rect x="17" y="3.5" width="2" height="3" fill="#999"/><rect x="5" y="6" width="26" height="2" fill="#999"/><rect x="7" y="8" width="22" height="12" fill="#fff" stroke="#999" stroke-width="1.6"/>
<path d="M10 24 L18 19.5 L26 24" stroke="#999" stroke-width="1.5" fill="none"/><circle cx="13.5" cy="14" r="3.6" fill="#3a6fdc"/><path d="M13.5 14 L17.1 14 A3.6 3.6 0 0 1 13.5 17.6 Z" fill="#fff"/>
<rect x="19" y="11" width="5" height="1.2" fill="#3a6fdc"/><rect x="19" y="13.5" width="5" height="1.2" fill="#3a6fdc"/><rect x="19" y="16" width="5" height="1.2" fill="#3a6fdc"/></g></svg></div>
<div class="btn" style="left:149px;top:498px"><svg width="36" height="36" viewBox="0 0 36 36" style="position:absolute;left:-1px;top:-1px"><rect x="6" y="6" width="24" height="24" fill="#ff3b8b"/><text x="18" y="22.3" font-size="12" fill="#fff" text-anchor="middle" font-family="Liberation Sans">B</text></svg></div>
<div class="btn" style="left:189px;top:498px"><svg width="36" height="36" viewBox="0 0 36 36" style="position:absolute;left:-1px;top:-1px"><rect x="6" y="6" width="24" height="24" fill="#88d35a"/><text x="18" y="22.3" font-size="12" fill="#fff" text-anchor="middle" font-family="Liberation Sans">K</text></svg></div>
<div class="btn" style="left:69px;top:538px"><svg width="36" height="36" viewBox="0 0 36 36" style="position:absolute;left:-1px;top:-1px"><rect x="6" y="6" width="24" height="24" rx="3.5" fill="#ee2a2a"/><text x="18" y="22" font-size="11" font-weight="normal" fill="#fff" text-anchor="middle" font-family="Liberation Sans" letter-spacing="-0.5">ERP</text></svg></div>
<div class="btn" style="left:69px;top:607px"><svg width="36" height="36" viewBox="0 0 36 36" style="position:absolute;left:-1px;top:-1px"><g transform="rotate(-17 18 17.3)"><rect x="10.5" y="10" width="15" height="14.6" fill="none" stroke="#f01010" stroke-width="1.8"/><rect x="11.5" y="15" width="8.5" height="8.6" fill="#f01010"/><rect x="13" y="16.5" width="5.5" height="5.5" fill="#fff"/>
<rect x="12" y="11.5" width="11.5" height="2.5" fill="none" stroke="#f01010" stroke-width="0.8"/><rect x="21" y="14.5" width="3" height="8.5" fill="none" stroke="#f01010" stroke-width="0.8"/><circle cx="15.7" cy="19.2" r="1.2" fill="none" stroke="#f01010" stroke-width="0.6"/></g></svg></div>
</body></html>
